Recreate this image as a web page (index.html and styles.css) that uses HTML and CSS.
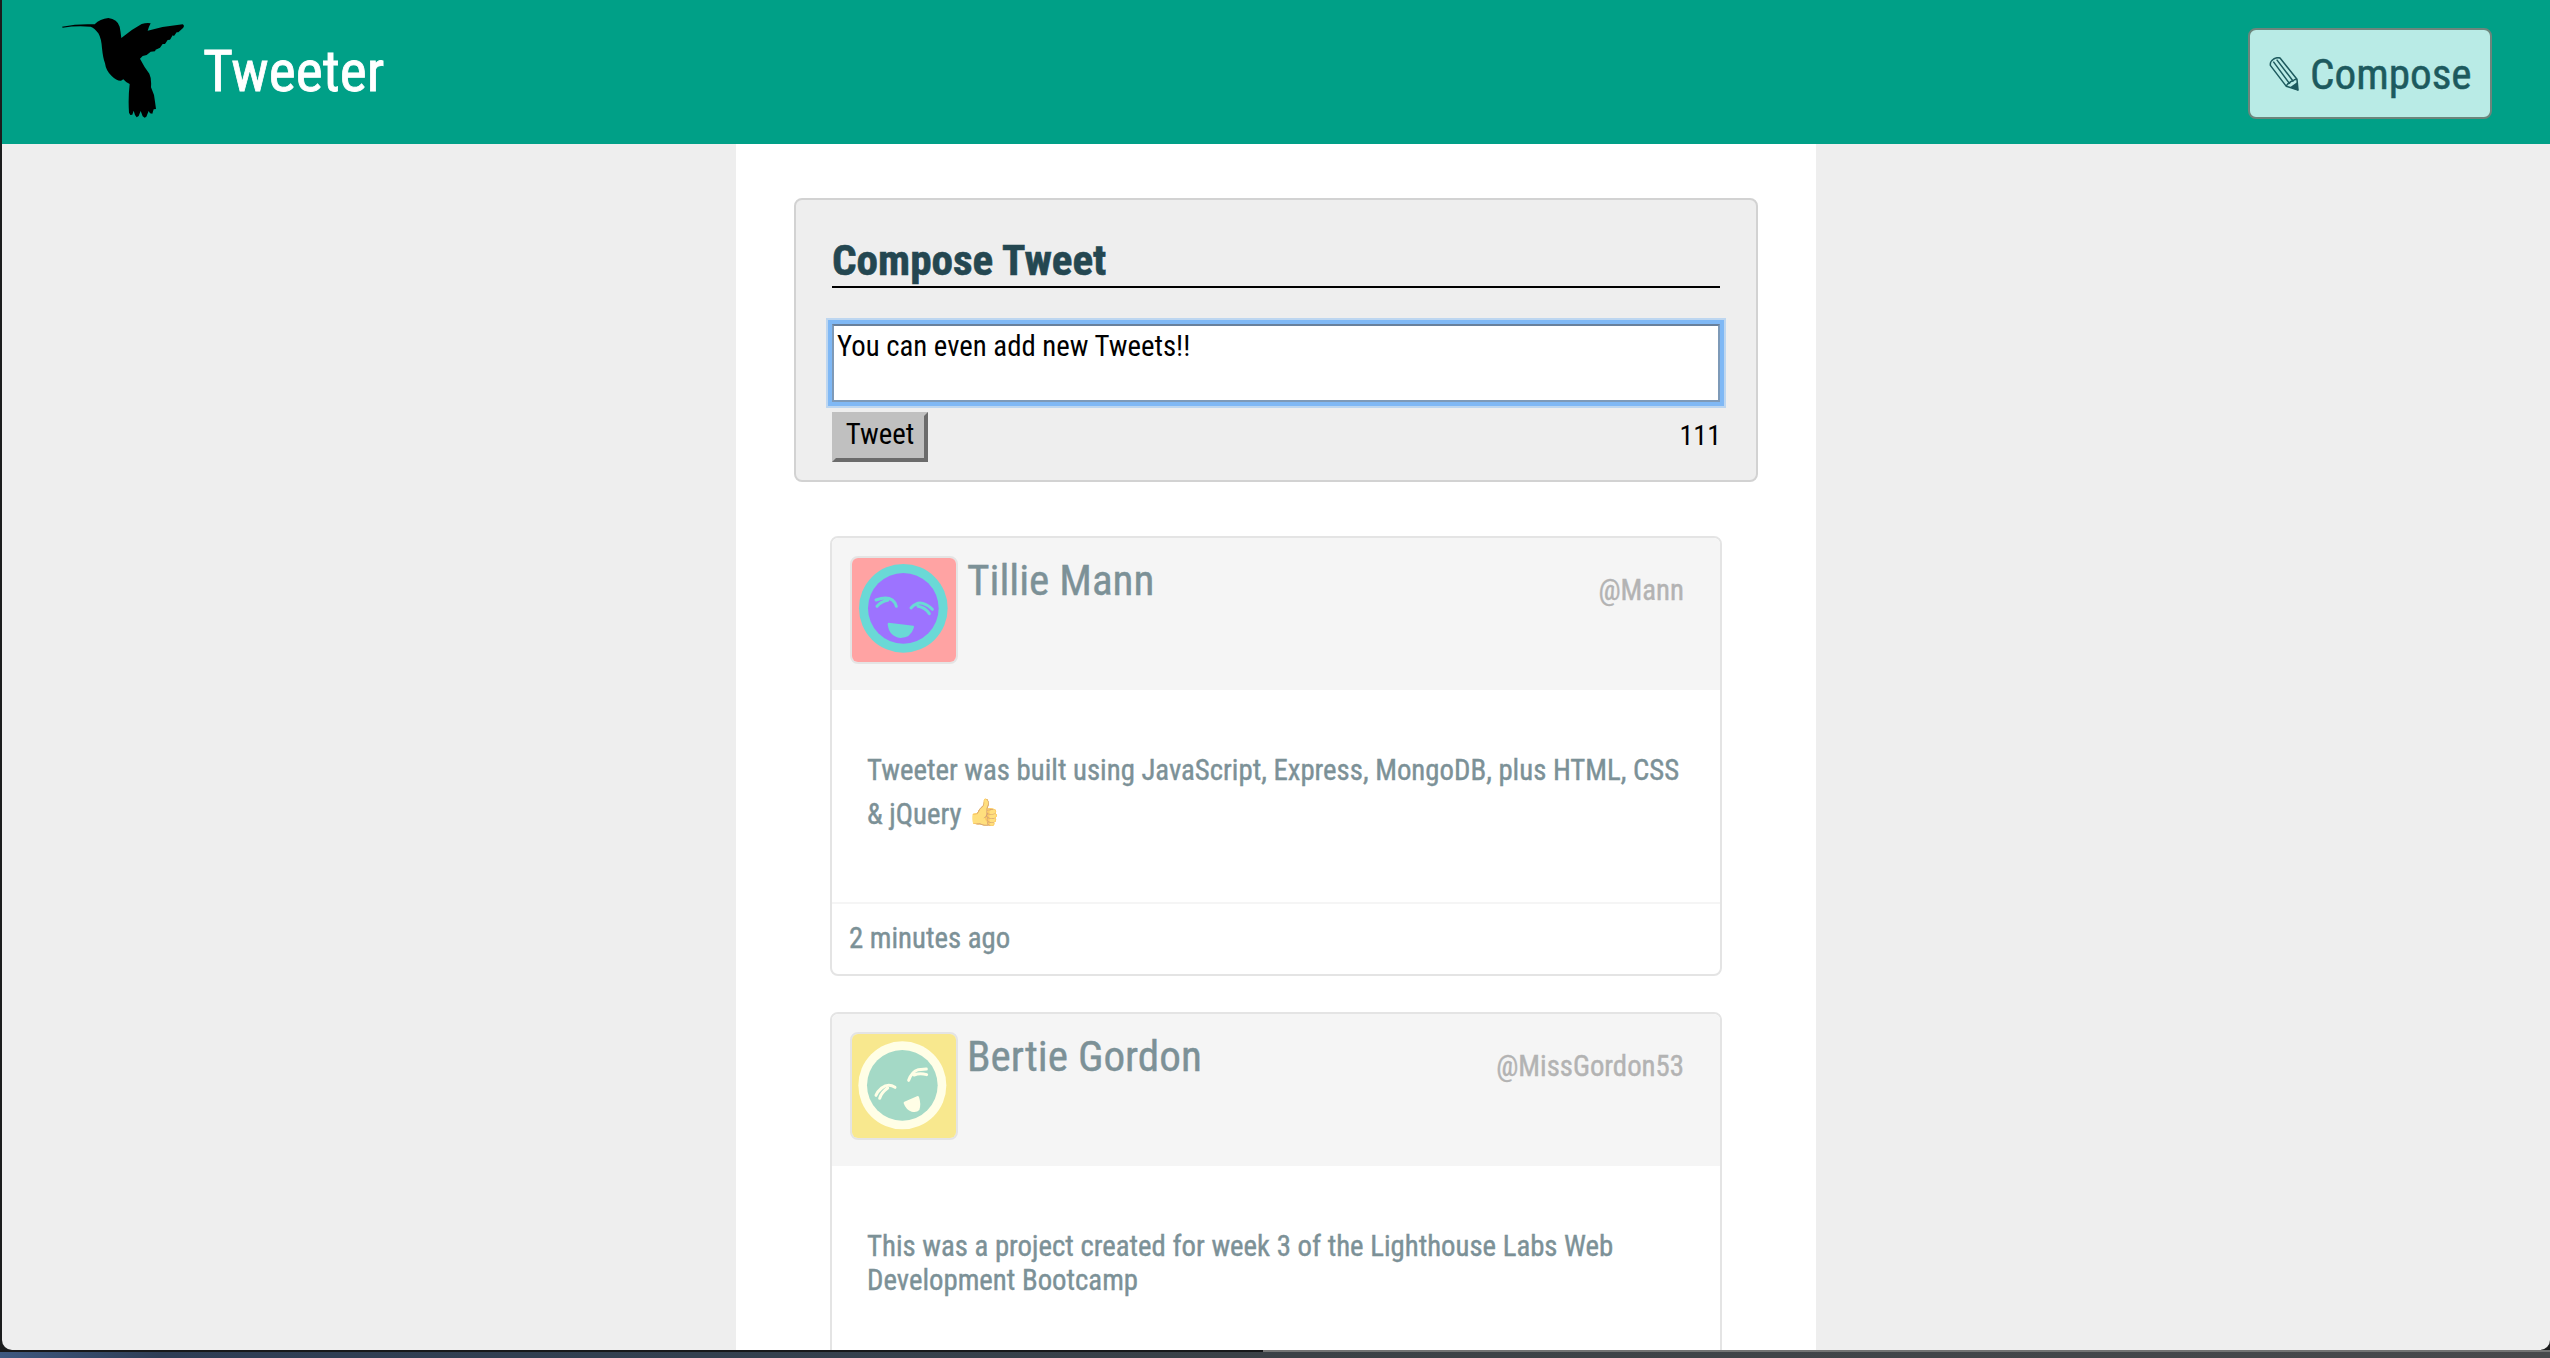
FILE: index.html
```
<!DOCTYPE html>
<html lang="en">
<head>
<meta charset="utf-8">
<title>Tweeter</title>
<link rel="stylesheet" href="styles.css">
</head>
<body>
<div class="window">
  <header class="navbar">
    <svg class="logo" viewBox="186 54 366 300" aria-hidden="true">
      <path d="M186 80Q230 72 272 73L284 73Q300 56 325 54Q352 57 359 80Q362 95 364 114Q395 88 425 72Q440 68 452 70L447 80L443 92Q495 78 548 73Q555 76 549 84L535 97L530 97L522 108L518 106L510 119L503 120L495 132L488 132L480 143L467 149L465 154L452 155L440 165L428 168L420 176Q432 200 448 221Q455 235 453 262L462 285L465 305L468 327L461 328L457 341L450 340L446 333L439 350L434 353L428 349L422 333L416 348L410 352L405 345L401 332L397 344L391 345L387 338Q384 295 389 252Q378 248 370 238L363 242Q350 243 335 228Q318 213 315 190Q309 175 306 145Q304 115 295 100Q285 85 272 80Q230 76 188 83Z"/>
    </svg>
    <h1 class="brand">Tweeter</h1>
    <button class="compose-toggle" type="button">
      <svg class="pencil" viewBox="147 171 88 102" aria-hidden="true">
        <path class="pencil-line" d="M150 192Q150 184 160 177Q170 171 179 174L230 238L233 270L198 259L150 196ZM159 185L207 250M169 179L218 243M198 259Q200 251 207 250Q210 243 218 243Q223 237 230 238"/>
        <path d="M209 262L230 247L234 272Z"/>
      </svg>
      <span>Compose</span>
    </button>
  </header>

  <main class="container">
    <section class="new-tweet">
      <h2 class="new-tweet-title">Compose Tweet</h2>
      <textarea class="tweet-input">You can even add new Tweets!!</textarea>
      <div class="new-tweet-actions">
        <button class="tweet-button" type="button">Tweet</button>
        <span class="counter">111</span>
      </div>
    </section>

    <section class="tweets">
      <article class="tweet">
        <header class="tweet-header">
          <svg class="avatar" viewBox="96 114 312 312" aria-hidden="true">
            <rect x="96" y="114" width="312" height="312" fill="#ffa3a3"/>
            <circle cx="250" cy="265" r="133" fill="#6ad9d6"/>
            <circle cx="250" cy="265" r="106" fill="#9d73ff"/>
            <path class="eyes" stroke="#6ad9d6" d="M168 240Q200 228 217 240Q226 247 229 259M171 259Q183 245 203 241M273 264Q290 245 308 250Q325 255 337 268M328 281Q315 262 294 259"/>
            <path fill="#6ad9d6" d="M206 308L280 317Q284 318 281 325Q272 354 241 354Q207 350 203 313Q203 308 206 308Z"/>
          </svg>
          <h2 class="name">Tillie Mann</h2>
          <span class="handle">@Mann</span>
        </header>
        <p class="tweet-body">Tweeter was built using JavaScript, Express, MongoDB, plus HTML, CSS &amp; jQuery <span class="emoji">👍</span></p>
        <footer class="tweet-footer">2 minutes ago</footer>
      </article>

      <article class="tweet">
        <header class="tweet-header">
          <svg class="avatar" viewBox="96 102 312 312" aria-hidden="true">
            <rect x="96" y="102" width="312" height="312" fill="#f8e88e"/>
            <circle cx="247" cy="256" r="132" fill="#fffee6"/>
            <circle cx="247" cy="256" r="106" fill="#a4d9c6"/>
            <path class="eyes" stroke="#fffee6" d="M225 262Q205 249 185 264Q172 275 168 286M179 295Q183 279 203 264M266 241Q275 215 295 209L319 207M320 224Q300 218 282 225"/>
            <path fill="#fffee6" d="M253 305L291 289Q295 287 297 291Q304 312 298 330Q290 339 275 335Q258 330 251 310Q250 307 253 305Z"/>
          </svg>
          <h2 class="name">Bertie Gordon</h2>
          <span class="handle">@MissGordon53</span>
        </header>
        <p class="tweet-body">This was a project created for week 3 of the Lighthouse Labs Web Development Bootcamp</p>
      </article>
    </section>
  </main>
</div>
<div class="window-edge"></div>
</body>
</html>
```
FILE: styles.css
```
* {
  box-sizing: border-box;
}

html {
  height: 100%;
  overflow: hidden;
}

body {
  margin: 0;
  height: 100%;
  display: flex;
  flex-direction: column;
  overflow: hidden;
  background: linear-gradient(90deg, #3d5880 0, #2e3d55 160px, #33404f 700px, #3b4146 1300px, #48494c 2550px) bottom / 100% 6px no-repeat #1b1c1d;
  font-family: "Roboto Condensed", Roboto, sans-serif;
  font-size: 28.8px;
  line-height: 34px;
}

.window {
  flex: none;
  height: 1350px;
  margin-left: 2px;
  overflow: hidden;
  border-radius: 0 0 10px 10px;
  background: #eee;
}

.window-edge {
  flex: none;
  height: 2px;
  background: linear-gradient(90deg, #17181a 1263px, #747474 1263px);
}

.navbar {
  display: flex;
  align-items: flex-start;
  height: 144px;
  padding: 18px 58px 0 60px;
  background: #00a087;
}

.logo {
  width: 122px;
  height: 100px;
}

.brand {
  margin: 20px auto 0 19px;
  color: #fff;
  font-size: 57.6px;
  font-weight: 400;
  line-height: 68px;
  -webkit-text-stroke: 0.8px currentColor;
}

.compose-toggle {
  display: flex;
  align-items: flex-start;
  width: 244px;
  height: 91px;
  margin-top: 10px;
  padding: 20px 0 0 19px;
  border: 2px solid #6c857c;
  border-radius: 8px;
  background: #b9ebe6;
  color: #1d5a5e;
  font: 43.2px/50px "Roboto Condensed", Roboto, sans-serif;
  -webkit-text-stroke: 0.5px currentColor;
}

.pencil {
  width: 30px;
  height: 34px;
  margin: 7px 11px 0 0;
  fill: currentColor;
}

.pencil-line {
  fill: none;
  stroke: currentColor;
  stroke-width: 4.5;
  stroke-linejoin: round;
}

.container {
  width: 1080px;
  height: 1206px;
  margin-left: 734px;
  padding: 54px 58px 0;
  overflow: hidden;
  background: #fff;
}

.new-tweet {
  height: 284px;
  padding: 36px;
  border: 2px solid #d2d2d2;
  border-radius: 8px;
  background: #eee;
}

.new-tweet-title {
  margin: 0 0 36px;
  border-bottom: 2px solid #000;
  color: #244751;
  font-size: 43.2px;
  font-weight: 700;
  line-height: 50px;
  -webkit-text-stroke: 0.6px currentColor;
}

.tweet-input {
  display: block;
  width: 100%;
  height: 78px;
  padding: 3px;
  border: 2px solid #7e9ab8;
  border-top-color: #68809c;
  outline: none;
  box-shadow: 0 0 0 4px #7fb8f5, 0 0 0 6px #bdd6f0;
  border-radius: 0;
  background: #fff;
  color: #000;
  font: inherit;
  resize: none;
  overflow: hidden;
}

.new-tweet-actions {
  display: flex;
  justify-content: space-between;
  align-items: flex-start;
  margin-top: 10px;
}

.tweet-button {
  width: 96px;
  height: 50px;
  padding: 1px 0 7px;
  border: 4px solid;
  border-color: #c0c0c0 #6b6b6b #6b6b6b #c0c0c0;
  background: #c0c0c0;
  color: #000;
  font: inherit;
}

.counter {
  margin: 7px -1px 0 0;
  font-size: 28px;
}

.tweets {
  display: flex;
  flex-direction: column;
  gap: 36px;
  margin: 54px 36px 0;
}

.tweet {
  height: 440px;
  border: 2px solid #e4e4e4;
  border-radius: 8px;
  overflow: hidden;
  color: #7c9197;
  -webkit-text-stroke: 0.4px currentColor;
}

.tweet-header {
  display: flex;
  align-items: flex-start;
  height: 152px;
  padding: 18px 36px 0 18px;
  background: #f5f5f5;
}

.avatar {
  width: 108px;
  height: 108px;
  border: 2px solid #e4e4e4;
  border-radius: 8px;
}

.eyes {
  fill: none;
  stroke-width: 9;
  stroke-linecap: round;
}

.name {
  margin: 0 auto 0 9px;
  font-size: 43.2px;
  font-weight: 400;
  line-height: 50px;
}

.handle {
  margin-top: 17px;
  color: #b3b3b3;
}

.tweet-body {
  height: 212px;
  margin: 0;
  padding: 63px 36px 0 35px;
}

.emoji {
  display: inline-block;
  height: 44px;
  padding-top: 8px;
  font-family: "Noto Color Emoji", sans-serif;
  font-size: 26px;
  line-height: 34px;
  opacity: 0.6;
  vertical-align: 3px;
}

.tweet-footer {
  height: 72px;
  padding: 17px 17px 0;
  border-top: 2px solid #f5f5f5;
}
```
